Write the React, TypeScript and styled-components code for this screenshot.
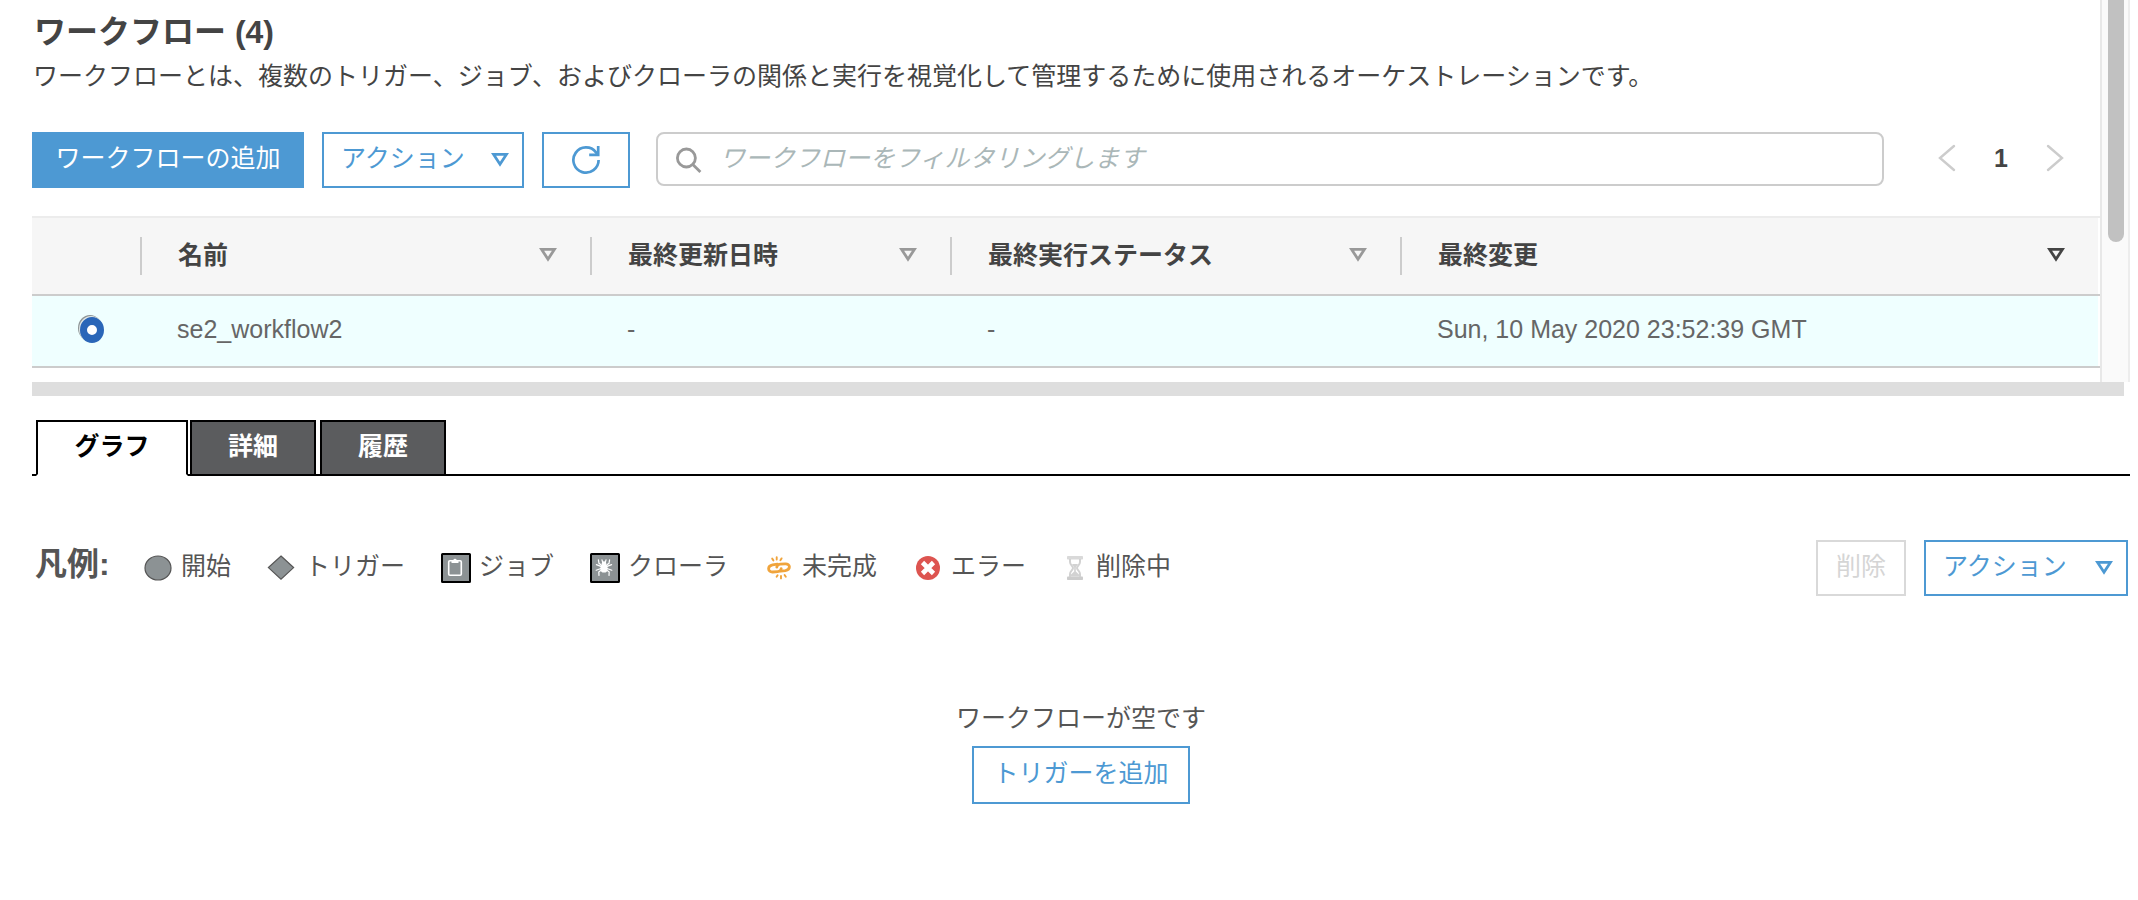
import React from "react";
import styled, { createGlobalStyle, css } from "styled-components";

const blue = "#4d99d3";

const GlobalStyle = createGlobalStyle`
  *, *::before, *::after { box-sizing: border-box; }
  body {
    margin: 0;
    background: #fff;
    color: #444;
    font-family: "Liberation Sans", "Noto Sans CJK JP", sans-serif;
    font-size: 25px;
    line-height: 36px;
  }
  button, input { font: inherit; }
`;

const Page = styled.div`
  padding-left: 32px;
`;

const ListPane = styled.section`
  display: flex;
  height: 382px;
  padding-right: 8px;
`;

const ListContent = styled.div`
  flex: 1;
  min-width: 0;
`;

const ScrollTrack = styled.div`
  flex: none;
  width: 30px;
  padding-left: 6px;
  background: #fafafa;
  border-left: 2px solid #e8e8e8;
  border-right: 2px solid #ededed;
`;

const ScrollThumb = styled.div`
  width: 16px;
  height: 242px;
  background: #c1c1c1;
  border-radius: 0 0 8px 8px;
`;

const Title = styled.h1`
  margin: 0;
  padding: 8px 0 0 2px;
  font-size: 32px;
  line-height: 48px;
  font-weight: 700;
`;

const Description = styled.p`
  margin: 0;
  padding: 2px 0 0 1px;
`;

const Toolbar = styled.div`
  display: flex;
  align-items: flex-start;
  gap: 18px;
  margin-top: 38px;
  height: 84px;
`;

const Button = styled.button<{ $primary?: boolean; $width: number }>`
  display: flex;
  align-items: center;
  justify-content: center;
  flex: none;
  width: ${(p) => p.$width}px;
  height: 56px;
  padding: 0 0 4px;
  border: 2px solid ${blue};
  background: ${(p) => (p.$primary ? blue : "#fff")};
  color: ${(p) => (p.$primary ? "#fff" : blue)};
  white-space: nowrap;
  &:disabled {
    border-color: #d9d9d9;
    color: #d5d5d5;
  }
`;

const MenuButton = styled(Button)`
  justify-content: space-between;
  padding: 0 13px 4px 17px;
  svg { margin-top: 4px; }
`;

const IconButton = styled(Button)`
  padding: 0;
`;

const Search = styled.label`
  display: flex;
  align-items: center;
  flex: 1;
  height: 54px;
  margin-left: 8px;
  padding: 0 16px 0 18px;
  gap: 16px;
  border: 2px solid #ccc;
  border-radius: 8px;
`;

const SearchInput = styled.input`
  flex: 1;
  min-width: 0;
  height: 46px;
  padding: 0 0 2px;
  border: 0;
  outline: 0;
  background: transparent;
  color: #444;
  &::placeholder {
    color: #aab7b8;
    font-style: italic;
    opacity: 1;
  }
`;

const Pager = styled.nav`
  display: flex;
  align-items: center;
  gap: 34px;
  height: 54px;
  margin: 0 36px;
  padding-bottom: 2px;
`;

const PageButton = styled.button`
  display: flex;
  padding: 0;
  border: 0;
  background: none;
`;

const PageNumber = styled.span`
  width: 22px;
  text-align: center;
  font-weight: 700;
`;

const Table = styled.table`
  width: 100%;
  table-layout: fixed;
  border-collapse: separate;
  border-spacing: 0;
  th:last-child, td:last-child { box-shadow: inset -2px 0 #fff; }
`;

const Th = styled.th<{ $width?: number }>`
  width: ${(p) => (p.$width ? `${p.$width}px` : "auto")};
  height: 80px;
  padding: 0;
  background: #f6f6f6;
  border-top: 2px solid #ececec;
  border-bottom: 2px solid #ccc;
  text-align: left;
`;

const HeadCell = styled.div<{ $divided?: boolean }>`
  display: flex;
  align-items: center;
  justify-content: space-between;
  height: 38px;
  padding: 0 33px 2px 36px;
  border-right: 2px solid ${(p) => (p.$divided ? "#ccc" : "transparent")};
`;

const Td = styled.td`
  height: 72px;
  padding: 0 0 4px 35px;
  background: #efffff;
  border-bottom: 2px solid #ccc;
  color: #666;
`;

const Radio = styled.input`
  display: block;
  appearance: none;
  width: 24px;
  height: 26px;
  margin: 2px 0 0 13px;
  border: 8px solid #2a66b8;
  border-width: 8px 7px;
  border-radius: 50%;
  background: #fff;
  box-shadow: -1px -1px 0 #dfe6e6, -2px -2px 0 #8d9495;
`;

const Splitter = styled.div`
  height: 14px;
  margin-right: 14px;
  background: #dedede;
`;

const Tabs = styled.div`
  display: flex;
  margin: 24px 8px 0 0;
  padding-left: 4px;
  height: 56px;
  box-shadow: inset 0 -2px #000;
`;

const Tab = styled.button<{ $active?: boolean }>`
  height: 56px;
  padding: 0 36px 4px;
  border: 2px solid #000;
  background: #5b5c5e;
  color: #fff;
  font-weight: 700;
  margin-right: 4px;
  ${(p) =>
    p.$active &&
    css`
      width: 152px;
      margin-right: 2px;
      background: #fff;
      color: #000;
      border-bottom-color: #fff;
    `}
`;

const GraphBar = styled.div`
  display: flex;
  align-items: center;
  gap: 18px;
  height: 56px;
  margin: 64px 10px 0 3px;
`;

const Legend = styled.div`
  display: flex;
  align-items: center;
  flex: 1;
  height: 56px;
  color: #555;
`;

const LegendTitle = styled.h2`
  width: 108px;
  margin: 0;
  padding-bottom: 8px;
  font-size: 32px;
  line-height: 40px;
`;

const LegendList = styled.ul`
  display: flex;
  gap: 36px;
  margin: 0;
  padding: 0;
  list-style: none;
`;

const LegendItem = styled.li`
  display: flex;
  align-items: center;
  gap: 8px;
  white-space: nowrap;
  svg { display: block; flex: none; }
`;

const LegendText = styled.span`
  padding-bottom: 4px;
`;

const Empty = styled.div`
  display: flex;
  flex-direction: column;
  align-items: center;
  gap: 10px;
  margin: 104px 8px 0 0;
  color: #555;
`;

const AddTrigger = styled(Button)`
  height: 58px;
`;

const Caret = ({ color }: { color: string }) => (
  <svg width="18" height="16" viewBox="0 0 18 16" aria-hidden="true">
    <path d="M2.6 2.4h12.8L9 12.2z" fill="none" stroke={color} strokeWidth="2.8" />
  </svg>
);

const Chevron = ({ right }: { right?: boolean }) => (
  <svg width="18" height="28" viewBox="0 0 18 28" fill="none" stroke="#ccc" strokeWidth="2.4" strokeLinecap="round" aria-hidden="true">
    <path d={right ? "M2 2l14 12L2 26" : "M16 2L2 14l14 12"} />
  </svg>
);

const RefreshIcon = () => (
  <svg width="30" height="30" viewBox="0 0 30 30" fill="none" stroke={blue} strokeWidth="2.7" aria-hidden="true">
    <path d="M27.6 15A12.6 12.6 0 1 1 25 7.4L27 10" />
    <path d="M27.2 1V9.8H18.2" />
  </svg>
);

const SearchIcon = () => (
  <svg width="28" height="28" viewBox="0 0 28 28" fill="none" stroke="#999" strokeWidth="2.8" aria-hidden="true">
    <circle cx="10.4" cy="13" r="9" />
    <path d="M16.8 19.4L24.4 27" />
  </svg>
);

const StartIcon = () => (
  <svg width="30" height="26" viewBox="0 0 30 26" aria-hidden="true">
    <ellipse cx="15" cy="13" rx="13" ry="12" fill="#8c9294" stroke="#555" strokeWidth="1.2" />
  </svg>
);

const TriggerIcon = () => (
  <svg width="30" height="26" viewBox="0 0 30 26" aria-hidden="true">
    <path d="M14 1l12.6 11.6L14 24.2 1.4 12.6z" fill="#8c9294" stroke="#555" strokeWidth="1.2" />
  </svg>
);

const JobIcon = () => (
  <svg width="30" height="30" viewBox="0 0 30 30" aria-hidden="true">
    <rect x="1" y="1" width="28" height="28" rx="0.5" fill="#8c9294" stroke="#000" strokeWidth="2" />
    <rect x="7.7" y="7.7" width="12.6" height="14.6" rx="1.2" fill="none" stroke="#fff" strokeWidth="1.6" />
    <path d="M10.5 7h1.8a1.8 1.8 0 0 1 3.4 0h1.8v3h-7z" fill="#fff" />
  </svg>
);

const CrawlerIcon = () => (
  <svg width="30" height="30" viewBox="0 0 30 30" aria-hidden="true">
    <rect x="1" y="1" width="28" height="28" rx="0.5" fill="#8c9294" stroke="#000" strokeWidth="2" />
    <g fill="none" stroke="#fff" strokeWidth="1.2" strokeLinecap="round">
      <path d="M12 12.5L9 10.3 8.4 6.8M16 12.5l3-2.2.6-3.5M11.5 13.6L6.4 11.6M16.5 13.6l5.1-2M11.5 15.2L6.2 17.2M16.5 15.2l5.3 2M12 16.6L8.8 19l.2 3.4M16 16.6l3.2 2.4-.2 3.4" />
      <path d="M12.7 9.5l-.7-2.6M15.3 9.5l.7-2.6" />
    </g>
    <circle cx="14" cy="10.6" r="2.3" fill="#fff" />
    <ellipse cx="14" cy="15.4" rx="3.6" ry="4.2" fill="#fff" />
  </svg>
);

const BrokenLinkIcon = () => (
  <svg width="30" height="26" viewBox="-3 -1 30 26" fill="none" stroke="#f0a43c" strokeLinecap="round" aria-hidden="true">
    <path d="M10.4 8.2L5.6 8.8C3.2 9.2 1.6 10.8 1.6 12.8s1.8 3.4 4.2 3.2l5-.4c2-.2 3.2-1.4 3.4-3" strokeWidth="2.8" />
    <path d="M13.6 15.2l4.8-.6c2.4-.4 4-2 4-3.8S20.600 7.600 18.200 7.800l-5 .4c-2 .2-3.2 1.400-3.400 3" strokeWidth="2.8" />
    <path d="M9.700 1.200v2.400M5.200 2.600l1.200 1.800M14.600 2.400l-1.200 1.800M14 20v2.400M9.600 20.800l1-1.600M18.800 20.800l-1.200-1.800" strokeWidth="1.900" />
  </svg>
);

const ErrorIcon = () => (
  <svg width="30" height="26" viewBox="-2 0 30 26" aria-hidden="true">
    <circle cx="13" cy="13" r="12" fill="#dd5450" />
    <path d="M7.500 7.500l11 11M18.500 7.500l-11 11" stroke="#fff" strokeWidth="4.600" />
  </svg>
);

const HourglassIcon = () => (
  <svg width="26" height="24" viewBox="-5 0 26 24" aria-hidden="true">
    <rect x="0" y="0" width="16" height="3.600" rx="0.800" fill="#d9d9d9" />
    <rect x="0" y="20.400" width="16" height="3.600" rx="0.800" fill="#ccc" />
    <path d="M3 3v3c0 3 3 4 3 6s-3 3-3 6v3M13 3v3c0 3-3 4-3 6s3 3 3 6v3" fill="none" stroke="#d2d2d2" strokeWidth="2" />
    <path d="M5 8h6L8.800 11.500v4L12 18.500v2H4v-2l3.200-3v-4z" fill="#d2d2d2" />
  </svg>
);

const columns = [
  { label: "名前", width: 450 },
  { label: "最終更新日時", width: 360 },
  { label: "最終実行ステータス", width: 450 },
  { label: "最終変更", sorted: true },
];

const legend = [
  { label: "開始", icon: <StartIcon /> },
  { label: "トリガー", icon: <TriggerIcon /> },
  { label: "ジョブ", icon: <JobIcon /> },
  { label: "クローラ", icon: <CrawlerIcon /> },
  { label: "未完成", icon: <BrokenLinkIcon /> },
  { label: "エラー", icon: <ErrorIcon /> },
  { label: "削除中", icon: <HourglassIcon /> },
];

export default function App() {
  return (
    <Page lang="ja">
      <GlobalStyle />
      <ListPane>
        <ListContent>
          <Title>ワークフロー (4)</Title>
          <Description>
            ワークフローとは、複数のトリガー、ジョブ、およびクローラの関係と実行を視覚化して管理するために使用されるオーケストレーションです。
          </Description>
          <Toolbar>
            <Button $primary $width={272}>ワークフローの追加</Button>
            <MenuButton $width={202}>
              アクション
              <Caret color={blue} />
            </MenuButton>
            <IconButton $width={88} aria-label="更新">
              <RefreshIcon />
            </IconButton>
            <Search>
              <SearchIcon />
              <SearchInput
                type="text"
                aria-label="ワークフローをフィルタリングします"
                placeholder="ワークフローをフィルタリングします"
              />
            </Search>
            <Pager aria-label="ページ">
              <PageButton aria-label="前へ"><Chevron /></PageButton>
              <PageNumber>1</PageNumber>
              <PageButton aria-label="次へ"><Chevron right /></PageButton>
            </Pager>
          </Toolbar>
          <Table>
            <thead>
              <tr>
                <Th $width={110}>
                  <HeadCell $divided />
                </Th>
                {columns.map((c) => (
                  <Th key={c.label} $width={c.width} scope="col">
                    <HeadCell $divided={!c.sorted}>
                      {c.label}
                      <Caret color={c.sorted ? "#444" : "#999"} />
                    </HeadCell>
                  </Th>
                ))}
              </tr>
            </thead>
            <tbody>
              <tr>
                <Td>
                  <Radio type="radio" name="workflow" defaultChecked aria-label="se2_workflow2" />
                </Td>
                <Td>se2_workflow2</Td>
                <Td>-</Td>
                <Td>-</Td>
                <Td>Sun, 10 May 2020 23:52:39 GMT</Td>
              </tr>
            </tbody>
          </Table>
        </ListContent>
        <ScrollTrack>
          <ScrollThumb />
        </ScrollTrack>
      </ListPane>
      <Splitter />
      <Tabs role="tablist">
        <Tab role="tab" aria-selected="true" $active>グラフ</Tab>
        <Tab role="tab" aria-selected="false">詳細</Tab>
        <Tab role="tab" aria-selected="false">履歴</Tab>
      </Tabs>
      <GraphBar>
        <Legend>
          <LegendTitle>凡例:</LegendTitle>
          <LegendList>
            {legend.map((l) => (
              <LegendItem key={l.label}>
                {l.icon}
                <LegendText>{l.label}</LegendText>
              </LegendItem>
            ))}
          </LegendList>
        </Legend>
        <Button $width={90} disabled>削除</Button>
        <MenuButton $width={204}>
          アクション
          <Caret color={blue} />
        </MenuButton>
      </GraphBar>
      <Empty>
        ワークフローが空です
        <AddTrigger $width={218}>トリガーを追加</AddTrigger>
      </Empty>
    </Page>
  );
}
